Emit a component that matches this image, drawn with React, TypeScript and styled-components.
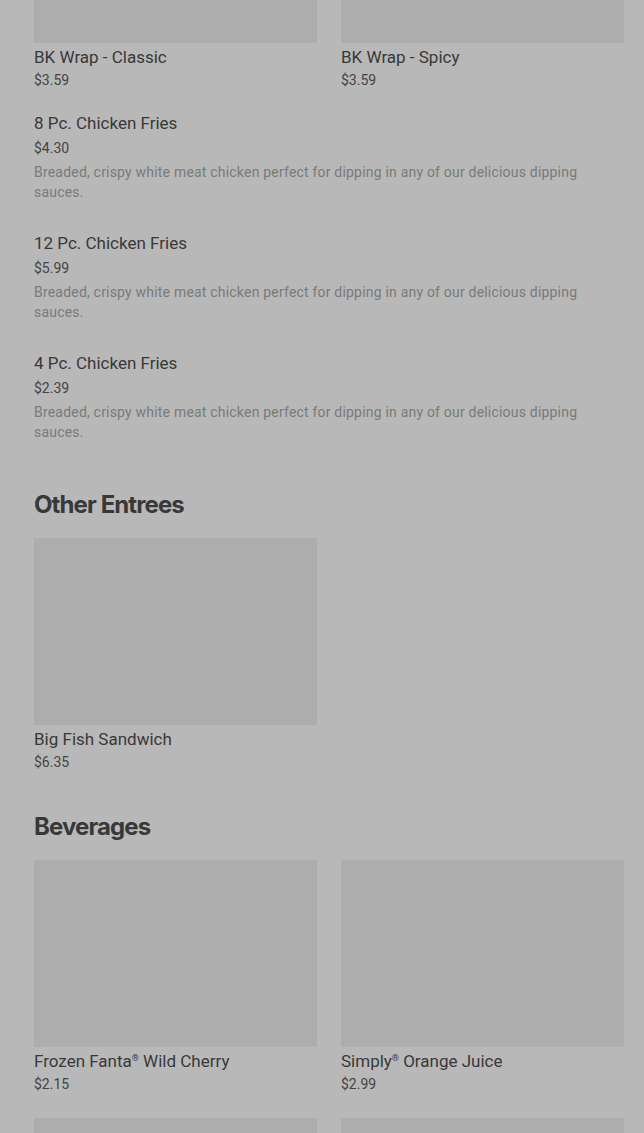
import styled, { createGlobalStyle } from 'styled-components';

const GlobalStyle = createGlobalStyle`
  html, body {
    margin: 0;
    padding: 0;
    background: #b8b8b8;
    overflow: hidden;
  }
  body {
    font-family: Roboto, "Liberation Sans", sans-serif;
    color: #3a3a3a;
  }
`;

type Item = { name?: string; price?: string; description?: string };

const wraps: Item[] = [
  { name: 'BK Wrap - Classic', price: '$3.59' },
  { name: 'BK Wrap - Spicy', price: '$3.59' },
];

const friesText =
  'Breaded, crispy white meat chicken perfect for dipping in any of our delicious dipping sauces.';

const fries: Item[] = [
  { name: '8 Pc. Chicken Fries', price: '$4.30', description: friesText },
  { name: '12 Pc. Chicken Fries', price: '$5.99', description: friesText },
  { name: '4 Pc. Chicken Fries', price: '$2.39', description: friesText },
];

const entrees: Item[] = [{ name: 'Big Fish Sandwich', price: '$6.35' }];

// the last row only shows its pictures at the bottom edge
const beverages: Item[] = [
  { name: 'Frozen Fanta® Wild Cherry', price: '$2.15' },
  { name: 'Simply® Orange Juice', price: '$2.99' },
  {},
  {},
];

// puts the ® sign up small, like the menu does
function Name({ text }: { text: string }) {
  const parts = text.split('®');
  return (
    <>
      {parts.map((part, i) => (
        <span key={i}>
          {part}
          {i < parts.length - 1 && <Reg>®</Reg>}
        </span>
      ))}
    </>
  );
}

function CardGrid({ items }: { items: Item[] }) {
  return (
    <Grid>
      {items.map((item, i) => (
        <Card key={item.name ?? i}>
          <Thumb />
          {item.name && (
            <CardName>
              <Name text={item.name} />
            </CardName>
          )}
          {item.price && <CardPrice>{item.price}</CardPrice>}
        </Card>
      ))}
    </Grid>
  );
}

export default function App() {
  return (
    <>
      <GlobalStyle />
      <Page>
        <TopGrid>
          <CardGrid items={wraps} />
        </TopGrid>
        <List>
          {fries.map((item) => (
            <ListItem key={item.name}>
              <ItemName>{item.name}</ItemName>
              <ItemPrice>{item.price}</ItemPrice>
              <ItemDesc>{item.description}</ItemDesc>
            </ListItem>
          ))}
        </List>
        <Section>
          <Heading>Other Entrees</Heading>
          <CardGrid items={entrees} />
        </Section>
        <Section $tight>
          <Heading>Beverages</Heading>
          <CardGrid items={beverages} />
        </Section>
      </Page>
    </>
  );
}

const Page = styled.main`
  display: flow-root;
  padding: 0 20px 0 34px;
  height: 1133px;
  overflow: hidden;
`;

const TopGrid = styled.div`
  margin-top: -144px;
`;

const Grid = styled.div`
  display: grid;
  grid-template-columns: 1fr 1fr;
  column-gap: 24px;
  row-gap: 23px;
`;

const Card = styled.div`
  display: flex;
  flex-direction: column;
`;

const Thumb = styled.div`
  height: 187px;
  background: #adadad;
  border-radius: 1px;
`;

const CardName = styled.div`
  margin-top: 2px;
  font-size: 17px;
  line-height: 24px;
  font-weight: 400;
  color: #383838;
`;

const Reg = styled.sup`
  font-size: 9px;
  line-height: 0;
  vertical-align: 6px;
`;

const CardPrice = styled.div`
  font-size: 14px;
  line-height: 22px;
  color: #444;
`;

const List = styled.div`
  margin-top: 20px;
  display: flex;
  flex-direction: column;
  gap: 29px;
`;

const ListItem = styled.div`
  display: flex;
  flex-direction: column;
`;

const ItemName = styled.div`
  font-size: 17px;
  line-height: 24px;
  font-weight: 400;
  color: #383838;
`;

const ItemPrice = styled.div`
  margin-top: 2px;
  font-size: 14px;
  line-height: 22px;
  color: #444;
`;

const ItemDesc = styled.p`
  margin: 3px 0 0;
  font-size: 14px;
  line-height: 20px;
  letter-spacing: 0.2px;
  color: #7a7a7a;
`;

const Section = styled.section<{ $tight?: boolean }>`
  margin-top: ${(p) => (p.$tight ? '38px' : '47px')};
`;

const Heading = styled.h2`
  margin: 0 0 17px;
  font-family: Inter, "Liberation Sans", sans-serif;
  font-size: 24px;
  line-height: 32px;
  font-weight: 700;
  letter-spacing: -0.9px;
  color: #383838;
`;
